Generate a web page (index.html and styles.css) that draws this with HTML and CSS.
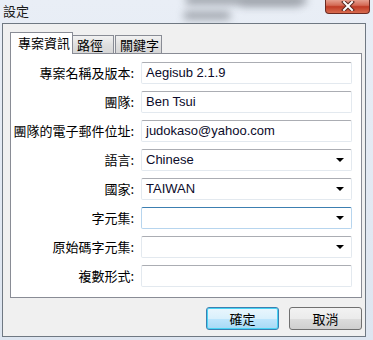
FILE: index.html
```html
<!DOCTYPE html>
<html lang="zh-Hant">
<head>
    <meta charset="UTF-8">
    <title>設定</title>
    <link rel="stylesheet" href="styles.css">
</head>
<body>
    <div class="window">
        <div class="titlebar">
            <span class="title">設定</span>
            <span class="blur blur-a"></span>
            <span class="blur blur-b"></span>
            <span class="blur blur-c"></span>
            <div class="close">
                <svg width="16" height="10" viewBox="0 0 16 10">
                    <path d="M4 1 L12 9 M12 1 L4 9" stroke="#5a2a22" stroke-width="4" stroke-linecap="square"/>
                    <path d="M4 1 L12 9 M12 1 L4 9" stroke="#ffffff" stroke-width="2" stroke-linecap="square"/>
                </svg>
            </div>
        </div>
        <div class="client">
            <div class="tabs">
                <div class="tab active">專案資訊</div>
                <div class="tab path">路徑</div>
                <div class="tab keys">關鍵字</div>
            </div>
            <div class="panel">
                <label>專案名稱及版本:</label>
                <div class="field">Aegisub 2.1.9</div>

                <label>團隊:</label>
                <div class="field">Ben Tsui</div>

                <label>團隊的電子郵件位址:</label>
                <div class="field">judokaso@yahoo.com</div>

                <label>語言:</label>
                <div class="field combo">Chinese<span class="arrow"></span></div>

                <label>國家:</label>
                <div class="field combo">TAIWAN<span class="arrow"></span></div>

                <label>字元集:</label>
                <div class="field combo hot"><span class="arrow"></span></div>

                <label>原始碼字元集:</label>
                <div class="field combo"><span class="arrow"></span></div>

                <label>複數形式:</label>
                <div class="field"></div>
            </div>
            <div class="buttons">
                <button class="default">確定</button>
                <button>取消</button>
            </div>
        </div>
    </div>
</body>
</html>
```

FILE: styles.css
```css
body {
    margin: 0;
    width: 373px;
    height: 340px;
    overflow: hidden;
    background: #dde6f1;
    font-family: "Noto Sans CJK TC", "DejaVu Sans", sans-serif;
    font-size: 13px;
    color: #000;
}
.window {
    width: 373px;
    height: 340px;
    background: linear-gradient(#e9eef6, #dde5f0);
}
.titlebar {
    height: 23px;
    position: relative;
    overflow: hidden;
}
.title {
    position: absolute;
    left: 3px;
    top: 1px;
    font-size: 13px;
    color: #1a1a1a;
}
.blur {
    position: absolute;
    background: #4a5058;
    filter: blur(4px);
    opacity: 0.55;
}
.blur-a {
    left: 186px;
    top: -4px;
    width: 120px;
    height: 8px;
}
.blur-b {
    left: 184px;
    top: 12px;
    width: 46px;
    height: 7px;
}
.blur-c {
    left: 240px;
    top: 2px;
    width: 60px;
    height: 5px;
    opacity: 0.3;
}
.close {
    position: absolute;
    right: 3px;
    top: -1px;
    width: 45px;
    height: 15px;
    box-sizing: border-box;
    border: 1px solid #6b2a22;
    border-top: none;
    border-radius: 0 0 4px 4px;
    background: linear-gradient(#e9a99a, #d46a55 45%, #c03b25 55%, #d86c50);
    display: flex;
    align-items: center;
    justify-content: center;
}
.client {
    margin-left: 2px;
    width: 364px;
    height: 314px;
    box-sizing: border-box;
    border: 1px solid #6f7882;
    background: #f0f0f0;
    padding: 8px 0 0 7px;
}
.tabs {
    display: flex;
    align-items: flex-end;
    height: 21px;
    position: relative;
    z-index: 1;
}
.tab {
    height: 18px;
    box-sizing: border-box;
    border: 1px solid #898c95;
    border-bottom: none;
    border-left: none;
    background: linear-gradient(#f2f2f2, #e0e0e0 50%, #d6d6d6);
    padding: 0 0 0 4px;
    line-height: 17px;
    font-size: 13px;
}
.tab.path {
    width: 41px;
}
.tab.keys {
    width: 47px;
    border-left: 1px solid #898c95;
    margin-left: 1px;
}
.tab.active {
    width: 63px;
    height: 22px;
    border-left: 1px solid #898c95;
    background: #fff;
    padding: 1px 0 0 7px;
    line-height: 18px;
    margin-bottom: -1px;
}
.panel {
    width: 352px;
    height: 245px;
    box-sizing: border-box;
    border: 1px solid #898c95;
    background: #fff;
    padding: 8px 9px 0 0;
    display: grid;
    grid-template-columns: 123px 211px;
    column-gap: 7px;
    row-gap: 7px;
    grid-auto-rows: 22px;
}
label {
    text-align: right;
    line-height: 22px;
    font-size: 13px;
    white-space: nowrap;
}
.field {
    position: relative;
    box-sizing: border-box;
    border: 1px solid #e3e9ef;
    border-top-color: #abadb3;
    border-radius: 2px;
    background: #fff;
    padding-left: 4px;
    font-family: "Liberation Sans", sans-serif;
    font-size: 13px;
    line-height: 20px;
    color: #0b0b2a;
}
.field.hot {
    border-color: #b7d5ee;
    border-top-color: #3c7fb1;
}
.arrow {
    position: absolute;
    right: 7px;
    top: 8px;
    width: 0;
    height: 0;
    border-left: 4px solid transparent;
    border-right: 4px solid transparent;
    border-top: 4px solid #000;
}
.buttons {
    display: flex;
    justify-content: flex-end;
    gap: 10px;
    width: 352px;
    margin-top: 9px;
}
button {
    width: 73px;
    height: 23px;
    border: 1px solid #707070;
    border-radius: 3px;
    background: linear-gradient(#f2f2f2, #ebebeb 50%, #dddddd 51%, #cfcfcf);
    font-family: "Noto Sans CJK TC", sans-serif;
    font-size: 13px;
    padding: 0;
    color: #000;
}
button.default {
    border-color: #3c7fb1;
    box-shadow: inset 0 0 0 1px #48d4f4;
    background: linear-gradient(#eaf6fd, #d9f0fc 50%, #bee6fd 51%, #a7d9f5);
}
```
